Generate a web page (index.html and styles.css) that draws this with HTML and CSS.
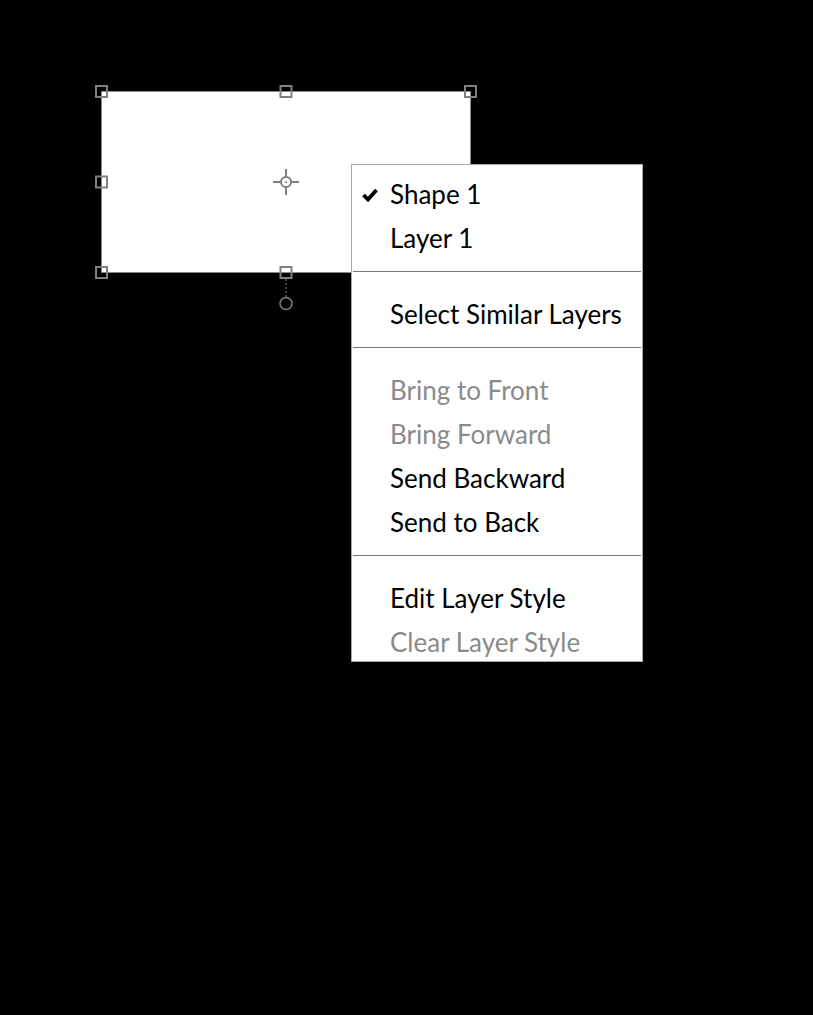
FILE: index.html
```html
<!DOCTYPE html>
<html lang="en">
<head>
<meta charset="utf-8">
<title>Layer context menu</title>
<link rel="stylesheet" href="styles.css">
</head>
<body>
<div class="canvas">
  <svg class="shape" width="400" height="240" viewBox="90 80 400 240" aria-hidden="true">
    <rect x="101.5" y="91.5" width="369" height="181" fill="#fff"/>
    <line x1="101.5" y1="91.5" x2="470.5" y2="91.5" stroke="#8c8c8c" stroke-width="1"/>
    <line x1="101.5" y1="91.5" x2="101.5" y2="272.5" stroke="#8c8c8c" stroke-width="1"/>
    <line x1="470.5" y1="91.5" x2="470.5" y2="272.5" stroke="#8c8c8c" stroke-width="1" stroke-dasharray="2 2"/>
    <line x1="101.5" y1="272.5" x2="470.5" y2="272.5" stroke="#8c8c8c" stroke-width="1" stroke-dasharray="2 2"/>
    <g fill="none" stroke="#808080" stroke-width="2">
      <rect x="96" y="86" width="11" height="11"/>
      <rect x="280.5" y="86" width="11" height="11"/>
      <rect x="465" y="86" width="11" height="11"/>
      <rect x="96" y="176.5" width="11" height="11"/>
      <rect x="96" y="267" width="11" height="11"/>
      <rect x="280.5" y="267" width="11" height="11"/>
    </g>
    <line x1="286" y1="279" x2="286" y2="297" stroke="#808080" stroke-width="1" stroke-dasharray="2 2"/>
    <circle cx="286" cy="303.5" r="6" fill="none" stroke="#808080" stroke-width="1.5"/>
    <g stroke="#808080" stroke-width="2" fill="none">
      <circle cx="286" cy="182" r="5"/>
      <line x1="273" y1="182" x2="281" y2="182"/>
      <line x1="291" y1="182" x2="299" y2="182"/>
      <line x1="286" y1="169" x2="286" y2="177"/>
      <line x1="286" y1="187" x2="286" y2="195"/>
    </g>
    <circle cx="286" cy="182" r="1" fill="#808080"/>
  </svg>

  <ul class="menu">
    <li class="item checked"><span class="check"><svg width="16" height="14" viewBox="0 0 16 14"><path d="M1.5 7 L6 11.5 L14.5 2" fill="none" stroke="#000" stroke-width="3.8"/></svg></span><span class="label">Shape 1</span></li>
    <li class="item"><span class="check"></span><span class="label">Layer 1</span></li>
    <li class="sep"></li>
    <li class="item"><span class="check"></span><span class="label">Select Similar Layers</span></li>
    <li class="sep"></li>
    <li class="item disabled"><span class="check"></span><span class="label">Bring to Front</span></li>
    <li class="item disabled"><span class="check"></span><span class="label">Bring Forward</span></li>
    <li class="item"><span class="check"></span><span class="label">Send Backward</span></li>
    <li class="item"><span class="check"></span><span class="label">Send to Back</span></li>
    <li class="sep"></li>
    <li class="item"><span class="check"></span><span class="label">Edit Layer Style</span></li>
    <li class="item disabled"><span class="check"></span><span class="label">Clear Layer Style</span></li>
  </ul>
</div>
</body>
</html>
```

FILE: styles.css
```css
html, body {
  margin: 0;
  padding: 0;
  background: #000;
}

.canvas {
  position: relative;
  width: 813px;
  height: 1015px;
  background: #000;
  overflow: hidden;
}

.shape {
  position: absolute;
  left: 90px;
  top: 80px;
  display: block;
}

.menu {
  position: absolute;
  left: 351px;
  top: 164px;
  width: 292px;
  height: 498px;
  box-sizing: border-box;
  margin: 0;
  padding: 7px 0 0 0;
  list-style: none;
  background: #fff;
  border: 1px solid #a8a8a8;
  overflow: hidden;
  font-family: "Lato", "Noto Sans", sans-serif;
  font-size: 26px;
  color: #000;
}

.item {
  display: flex;
  align-items: center;
  box-sizing: border-box;
  height: 44px;
  padding-top: 2px;
  line-height: 1.2;
  white-space: nowrap;
}

.check {
  display: flex;
  align-items: center;
  width: 38px;
  padding-left: 10px;
  box-sizing: border-box;
  flex: none;
}

.check svg {
  display: block;
}

.item.disabled {
  color: #8a8a8a;
}

.sep {
  height: 1px;
  margin: 11px 1px 20px 1px;
  background: #7a7a7a;
}
```
